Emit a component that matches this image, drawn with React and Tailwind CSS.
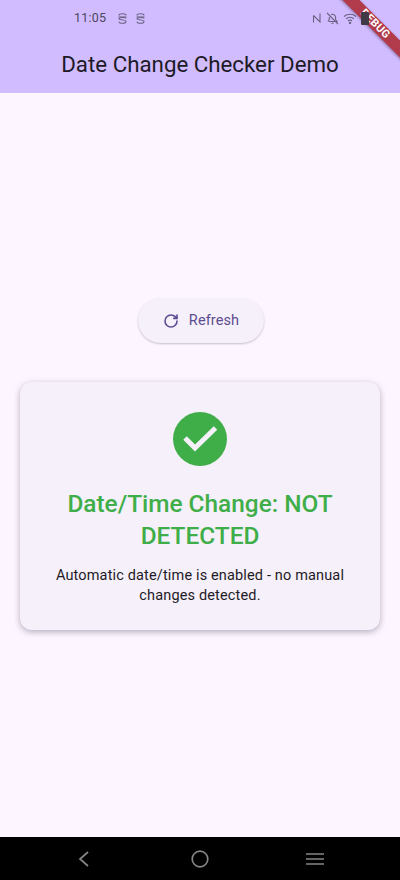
import React from "react";
import { RotateCw } from "lucide-react";

function SimIcon() {
  return (
    <svg width="11" height="13" viewBox="0 0 11 13" fill="none" stroke="#6a6280" strokeWidth="1.1">
      <path d="M2 3.5 C2 1.2 9 1.2 9 3.5" />
      <path d="M1.5 5h8" />
      <path d="M9 6.5 C9 5 2 5 2 7 C2 8 9 7.5 9 9.5 C9 11.8 2 11.8 2 9.8" />
    </svg>
  );
}

function StatusBar() {
  return (
    <div className="relative z-10 flex h-9 items-center pl-[74px] pr-[31px] text-[#4e4760]">
      <span className="w-[43px] text-[12.5px] tracking-[0.2px]">11:05</span>
      <div className="flex items-center gap-[7px]">
        <SimIcon />
        <SimIcon />
      </div>
      <div className="ml-auto flex items-center gap-[4px]">
        <svg width="10" height="12" viewBox="0 0 10 12" fill="none" stroke="#6a6280" strokeWidth="1.1">
          <path d="M1.5 3.5 L8 10 V1.5 M1.5 10.5 V3.5" />
        </svg>
        <svg width="13" height="13" viewBox="0 0 13 13" fill="none" stroke="#6a6280" strokeWidth="1.1">
          <path d="M1 1l11 11" />
          <path d="M3 9.5h8l-1.4-2V5.2A3.2 3.2 0 0 0 5 2.6M3.3 5v2.5L2 9.5" />
          <path d="M5.4 11.2h2.2" />
        </svg>
        <svg width="14" height="11" viewBox="0 0 14 11" fill="none" stroke="#6a6280" strokeWidth="1.1">
          <path d="M1 3.5c3.4-3 8.6-3 12 0" />
          <path d="M3 5.8c2.3-2 5.7-2 8 0" />
          <path d="M5 8c1.2-1 2.8-1 4 0" />
          <circle cx="7" cy="10" r="0.6" fill="#6a6280" />
        </svg>
        <div className="h-[13px] w-[8px] rounded-[1px] bg-[#3f3a45]" />
      </div>
    </div>
  );
}

function DebugBanner() {
  return (
    <div className="absolute right-[-30px] top-[18px] flex h-[12px] w-[110px] rotate-45 items-center justify-center bg-[#b13a4b] shadow-[0_1px_3px_rgba(60,20,60,0.45)]">
      <span className="text-[11px] font-bold tracking-[0.3px] text-white">DEBUG</span>
    </div>
  );
}

export default function App() {
  return (
    <div
      className="relative flex h-[880px] w-[400px] flex-col overflow-hidden bg-[#fdf5ff]"
      style={{ fontFamily: "Roboto, sans-serif" }}
    >
      <header className="h-[93px] bg-[#d0bcff]">
        <StatusBar />
        <h1 className="pt-[12px] text-center text-[22.3px] leading-[32px] text-[#1d1a26]">
          Date Change Checker Demo
        </h1>
      </header>

      <main className="flex flex-1 flex-col items-center justify-center pb-[2px]">
        <button className="ml-[2px] flex h-[45px] w-[126px] items-center justify-center gap-[10px] rounded-full bg-[#f6f0fa] text-[14.5px] text-[#5c4d91] shadow-[0_1px_2px_rgba(60,50,80,0.28)]">
          <RotateCw size={16} strokeWidth={2.4} />
          <span className="tracking-[0.1px]">Refresh</span>
        </button>

        <section className="mt-[39px] flex h-[248px] w-[360px] flex-col items-center rounded-[12px] bg-[#f5f0fa] px-[24px] pt-[30px] shadow-[0_2px_6px_rgba(50,40,70,0.35)]">
          <div className="flex h-[54px] w-[54px] items-center justify-center rounded-full bg-[#3fae49]">
            <svg width="36" height="30" viewBox="0 0 36 30" fill="none" stroke="#f5f0fa" strokeWidth="5">
              <path d="M3 14 L13 24 L33.5 4" />
            </svg>
          </div>
          <h2 className="mt-[22px] text-center text-[24.4px] font-medium leading-[32px] text-[#3fae49]">
            Date/Time Change: NOT DETECTED
          </h2>
          <p className="mt-[14px] text-center text-[14.5px] leading-[20px] tracking-[0.15px] text-[#1f1b26]">
            Automatic date/time is enabled - no manual changes detected.
          </p>
        </section>
      </main>

      <nav className="flex h-[43px] items-center justify-between bg-black pl-[75px] pr-[76px]">
        <div className="flex w-[18px] justify-center">
          <svg width="14" height="16" viewBox="0 0 14 16" fill="none" stroke="#858585" strokeWidth="1.7">
            <path d="M11 1 L3 8 L11 15" />
          </svg>
        </div>
        <svg width="18" height="18" viewBox="0 0 18 18" fill="none" stroke="#858585" strokeWidth="1.7">
          <circle cx="9" cy="9" r="7.8" />
        </svg>
        <svg width="18" height="14" viewBox="0 0 18 14" fill="none" stroke="#858585" strokeWidth="1.7">
          <path d="M0 2h18M0 7h18M0 12h18" />
        </svg>
      </nav>

      <DebugBanner />
    </div>
  );
}
